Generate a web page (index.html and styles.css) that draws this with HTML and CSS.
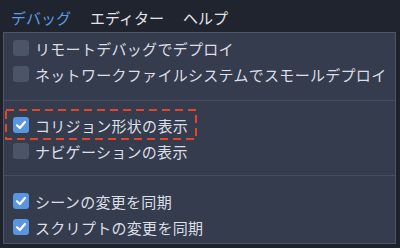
FILE: index.html
```html
<!DOCTYPE html>
<html lang="ja">
<head>
<meta charset="utf-8">
<link rel="stylesheet" href="styles.css">
</head>
<body>
<div class="menubar">
  <span class="menu active">デバッグ</span>
  <span class="menu">エディター</span>
  <span class="menu">ヘルプ</span>
</div>
<div class="panel">
  <div class="group g1">
    <div class="row"><span class="cb"></span><span>リモートデバッグでデプロイ</span></div>
    <div class="row"><span class="cb"></span><span>ネットワークファイルシステムでスモールデプロイ</span></div>
  </div>
  <div class="sep"></div>
  <div class="group g2">
    <div class="row"><span class="cb on"><svg viewBox="0 0 16 16"><path d="M4 8.3 L6.8 11 L12 5" fill="none" stroke="#fff" stroke-width="2.2" stroke-linecap="round" stroke-linejoin="round"/></svg></span><span>コリジョン形状の表示</span></div>
    <div class="row"><span class="cb"></span><span>ナビゲーションの表示</span></div>
  </div>
  <div class="sep"></div>
  <div class="group g3">
    <div class="row"><span class="cb on"><svg viewBox="0 0 16 16"><path d="M4 8.3 L6.8 11 L12 5" fill="none" stroke="#fff" stroke-width="2.2" stroke-linecap="round" stroke-linejoin="round"/></svg></span><span>シーンの変更を同期</span></div>
    <div class="row"><span class="cb on"><svg viewBox="0 0 16 16"><path d="M4 8.3 L6.8 11 L12 5" fill="none" stroke="#fff" stroke-width="2.2" stroke-linecap="round" stroke-linejoin="round"/></svg></span><span>スクリプトの変更を同期</span></div>
  </div>
</div>
<svg class="highlight" width="192" height="31" viewBox="0 0 192 31"><rect x="1" y="1" width="190" height="29" fill="none" stroke="#e2452a" stroke-width="2" stroke-dasharray="8 5"/></svg>
</body>
</html>
```
FILE: styles.css
```css
html, body {
  margin: 0;
  padding: 0;
}
body {
  width: 400px;
  height: 248px;
  overflow: hidden;
  background: #1e222b;
  font-family: "Noto Sans CJK JP", "Noto Sans", sans-serif;
  color: #dcdfe6;
  position: relative;
}
.menubar {
  height: 32px;
  box-sizing: border-box;
  padding: 3px 0 0 11px;
  display: flex;
  align-items: center;
  gap: 19px;
  background: #20242e;
  font-size: 15px;
}
.menu { color: #e2e4ea; }
.menu.active { color: #5c9de8; }
.panel {
  margin: 0 4px 0 3px;
  height: 212px;
  box-sizing: border-box;
  border: 1px solid #4d5569;
  background: #353c4e;
  font-size: 15px;
  letter-spacing: 0.3px;
}
.group.g1 { padding: 2px 0 13px; }
.group.g2 { padding: 11px 0 11px; }
.group.g3 { padding: 12px 0 0; }
.sep {
  height: 1px;
  background: #464e61;
}
.row {
  height: 26px;
  display: flex;
  align-items: center;
  padding-left: 9px;
  gap: 6px;
  white-space: nowrap;
}
.cb {
  width: 16px;
  height: 16px;
  border-radius: 3px;
  background: #4c5467;
  flex: none;
  display: flex;
}
.cb.on { background: #5a95df; }
.cb svg { width: 16px; height: 16px; }
.highlight {
  position: absolute;
  left: 5px;
  top: 109px;
}
```
